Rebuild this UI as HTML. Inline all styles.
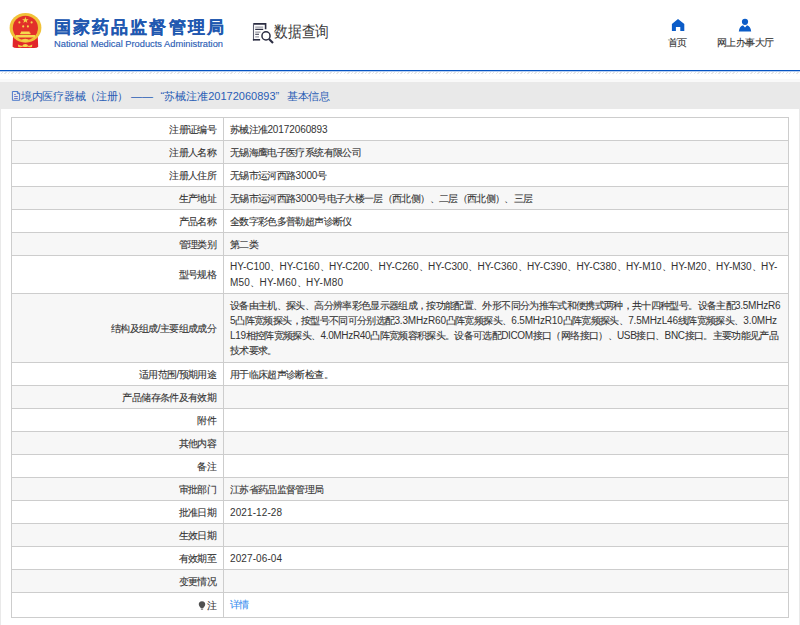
<!DOCTYPE html>
<html><head><meta charset="utf-8">
<style>
*{margin:0;padding:0;box-sizing:border-box}
html,body{width:800px;height:625px;overflow:hidden;background:#fff;font-family:"Liberation Sans",sans-serif;color:#333}
.abs{position:absolute;white-space:nowrap}
#title{left:54px;top:15.5px;font-size:17px;letter-spacing:2.1px;-webkit-text-stroke:0.15px #2158b0;font-weight:bold;color:#2158b0;line-height:24px}
#eng{left:54px;top:39px;font-size:9.3px;color:#2d60b5;-webkit-text-stroke:0.15px #2d60b5;line-height:11px}
#sq{left:274px;top:20.8px;font-size:16px;color:#3a3a3a;line-height:22px;transform:scaleX(0.86);transform-origin:0 0}
.nav{font-size:10px;letter-spacing:-0.6px;color:#333;-webkit-text-stroke:0.1px #333;line-height:12px}
#line{left:0;top:70px;width:800px;height:2px;background:linear-gradient(#0654c2 0 1px,#b9cff0 1px 2px)}
#hatch{left:0;top:72px;width:800px;height:2px;background:repeating-linear-gradient(135deg,#fff 0,#fff 1.5px,#e6e6e6 1.5px,#e6e6e6 2.5px)}
#gray{left:0;top:82px;width:800px;height:543px;background:#e9e9e9}
.pt{top:89px;font-size:11px;color:#2a5db5;line-height:14px}
#panel{left:1px;top:109px;width:798px;height:516px;background:#fff}
table{position:absolute;left:11px;top:117px;width:778px;border-collapse:collapse;table-layout:fixed;font-size:10px;letter-spacing:-0.65px;color:#333}
i{font-style:normal;font-size:10px;letter-spacing:-0.1px;-webkit-text-stroke-width:0}
span[style*="--ls"] i{letter-spacing:var(--ls)}
td{-webkit-text-stroke-width:0.1px;border:1px solid #cdcdcd;padding:0 7px 0 6px;vertical-align:middle;line-height:15px;white-space:nowrap}
td.l{text-align:right;width:212px;color:#333;position:relative}
tr:nth-child(even) td{background:#f7f7f7}
a{color:#3a90f0;text-decoration:none;position:relative;top:-1px}
</style></head><body>
<svg class="abs" style="left:0;top:0" width="50" height="56" viewBox="0 0 50 56">
  <path d="M13 37 L12.6 46.8 Q14 48.3 17.5 48.1 L33.5 48.1 Q37 48.3 38.2 46.8 L37.8 37 Z" fill="#e1262a"/>
  <ellipse cx="25.5" cy="27.8" rx="15.9" ry="14.9" fill="#f1c238"/>
  <ellipse cx="25.4" cy="27.9" rx="12.6" ry="12.1" fill="#e2302a"/>
  <polygon points="25.4,16.8 26.2,19.2 28.7,19.2 26.7,20.7 27.4,23.1 25.4,21.6 23.4,23.1 24.1,20.7 22.1,19.2 24.6,19.2" fill="#f5d54a"/>
  <circle cx="19.4" cy="22.4" r="1.05" fill="#f5d54a"/><circle cx="31.6" cy="22.4" r="1.05" fill="#f5d54a"/>
  <circle cx="23.2" cy="26.4" r="1.05" fill="#f5d54a"/><circle cx="27.9" cy="26.4" r="1.05" fill="#f5d54a"/>
  <path d="M21 31.4 H29.6 V32.7 H21 Z M20.2 32.7 H30.5 V34.3 H20.2 Z M15.9 35 H35 V37.4 H15.9 Z" fill="#f6d84e"/>
  
  <ellipse cx="25.2" cy="40.3" rx="3.2" ry="1.5" fill="#f3cf48"/>
  <path d="M17.9 44.6 Q21 46.2 23 45.4 L27.8 45.4 Q30 46.2 32.3 44.6 L32 47 Q29 47.4 27.5 46.6 L23.2 46.6 Q21 47.4 18.3 47 Z" fill="#f3cf48"/>
  <ellipse cx="25.3" cy="45.6" rx="2.6" ry="1.5" fill="#f6d84e"/>
</svg>
<div class="abs" id="title">国家药品监督管理局</div>
<div class="abs" id="eng">National Medical Products Administration</div>
<svg class="abs" style="left:248px;top:18px" width="30" height="28" viewBox="0 0 30 28">
  <path d="M5.5 5.9 H17.6 V11.3" fill="none" stroke="#2b2d42" stroke-width="1.6"/>
  <path d="M5.5 5.2 V22.5" fill="none" stroke="#5a5c6e" stroke-width="1.1"/>
  <path d="M4.9 21.8 H12.1" fill="none" stroke="#2b2d42" stroke-width="1.6"/>
  <path d="M7.2 9.2h8M7.2 14.1h5.3M7.2 18.8h3.8" stroke="#9a9ba6" stroke-width="1.2"/>
  <path d="M7.2 11.4h8M7.2 16.3h3.8" stroke="#2b2d42" stroke-width="1.1"/>
  <circle cx="18" cy="17.9" r="4.05" fill="none" stroke="#2b2d42" stroke-width="1.5"/>
  <path d="M21 21 L25 25" stroke="#2b2d42" stroke-width="2.1" stroke-linecap="butt"/>
</svg>
<div class="abs" id="sq">数据查询</div>
<svg class="abs" style="left:671px;top:18px" width="14" height="13" viewBox="0 0 14 13">
  <path d="M7 1 L13.3 6 V13 H9.3 V9 H4.9 V13 H0.9 V6 Z" fill="#0b5cc8"/>
</svg>
<div class="abs nav" style="left:668px;top:37px">首页</div>
<svg class="abs" style="left:738px;top:18px" width="14" height="14" viewBox="0 0 14 14">
  <circle cx="7" cy="3.8" r="3.1" fill="#0b5cc8"/>
  <path d="M0.8 13.5 Q1.5 8 5 7.2 L7 9.4 L9 7.2 Q12.5 8 13.2 13.5 Z" fill="#0b5cc8"/>
</svg>
<div class="abs nav" style="left:717px;top:37px">网上办事大厅</div>
<div class="abs" id="line"></div>
<div class="abs" id="hatch"></div>
<div class="abs" style="left:0;top:79px;width:800px;height:3px;background:#f9f9f9"></div>
<div class="abs" id="gray"></div>
<svg class="abs" style="left:11px;top:90px" width="11" height="12" viewBox="0 0 11 12">
  <path d="M1.4 1.5 H6.8 L8.6 3.3 V10.3 H1.4 Z" fill="none" stroke="#4574c9" stroke-width="0.95"/>
  <path d="M6.4 1.6 V3.6 H8.6" fill="none" stroke="#3c6dc6" stroke-width="0.9"/>
  <path d="M3.2 4.5h1.6M3.2 6.5h3.6M3.2 8.5h3.6" stroke="#5a6cc8" stroke-width="0.9"/>
</svg>
<div class="abs pt" style="left:21px;letter-spacing:-0.3px">境内医疗器械（注册）</div>
<div class="abs pt" style="left:131px;letter-spacing:0.1px">——</div>
<div class="abs pt" style="left:160.6px">“苏械注准20172060893”</div>
<div class="abs pt" style="left:286.7px;letter-spacing:-0.1px">基本信息</div>
<div class="abs" id="panel"></div>
<table>
<tr style="height:23px"><td class="l">注册证编号</td><td>苏械注准<i>20172060893</i></td></tr>
<tr style="height:23px"><td class="l">注册人名称</td><td>无锡海鹰电子医疗系统有限公司</td></tr>
<tr style="height:23px"><td class="l">注册人住所</td><td>无锡市运河西路<i>3000</i>号</td></tr>
<tr style="height:23px"><td class="l">生产地址</td><td>无锡市运河西路<i>3000</i>号电子大楼一层（西北侧）、二层（西北侧）、三层</td></tr>
<tr style="height:23px"><td class="l">产品名称</td><td>全数字彩色多普勒超声诊断仪</td></tr>
<tr style="height:23px"><td class="l">管理类别</td><td>第二类</td></tr>
<tr style="height:38px"><td class="l">型号规格</td><td style="line-height:16px"><span style="--ls:-0.013px"><i>HY-C100</i>、<i>HY-C160</i>、<i>HY-C200</i>、<i>HY-C260</i>、<i>HY-C300</i>、<i>HY-C360</i>、<i>HY-C390</i>、<i>HY-C380</i>、<i>HY-M10</i>、<i>HY-M20</i>、<i>HY-M30</i>、<i>HY-</i></span><br><span style="--ls:0.240px"><i>M50</i>、<i>HY-M60</i>、<i>HY-M80</i></span></td></tr>
<tr style="height:69px"><td class="l">结构及组成/主要组成成分</td><td><span style="--ls:-0.240px">设备由主机、探头、高分辨率彩色显示器组成，按功能配置、外形不同分为推车式和便携式两种，共十四种型号。设备主配<i>3.5MHzR6</i></span><br><span style="--ls:-0.153px"><i>5</i>凸阵宽频探头，按型号不同可分别选配<i>3.3MHzR60</i>凸阵宽频探头、<i>6.5MHzR10</i>凸阵宽频探头、<i>7.5MHzL46</i>线阵宽频探头、<i>3.0MHz</i></span><br><span style="--ls:-0.340px"><i>L19</i>相控阵宽频探头、<i>4.0MHzR40</i>凸阵宽频容积探头。设备可选配<i>DICOM</i>接口（网络接口）、<i>USB</i>接口、<i>BNC</i>接口。主要功能见产品</span><br>技术要求。</td></tr>
<tr style="height:23px"><td class="l">适用范围/预期用途</td><td>用于临床超声诊断检查。</td></tr>
<tr style="height:23px"><td class="l">产品储存条件及有效期</td><td></td></tr>
<tr style="height:23px"><td class="l">附件</td><td></td></tr>
<tr style="height:23px"><td class="l">其他内容</td><td></td></tr>
<tr style="height:23px"><td class="l">备注</td><td></td></tr>
<tr style="height:23px"><td class="l">审批部门</td><td>江苏省药品监督管理局</td></tr>
<tr style="height:23px"><td class="l">批准日期</td><td><i style="letter-spacing:0.1px">2021-12-28</i></td></tr>
<tr style="height:23px"><td class="l">生效日期</td><td></td></tr>
<tr style="height:23px"><td class="l">有效期至</td><td><i style="letter-spacing:0.1px">2027-06-04</i></td></tr>
<tr style="height:23px"><td class="l">变更情况</td><td></td></tr>
<tr style="height:25px"><td class="l"><svg style="position:absolute;left:186px;top:8px" width="8" height="9" viewBox="0 0 8 9"><path d="M4 0.3 C6.2 0.3 7.4 1.9 7.2 3.7 C7 5.2 5.6 6 5.1 7.3 H2.9 C2.4 6 1 5.2 0.8 3.7 C0.6 1.9 1.8 0.3 4 0.3 Z" fill="#505050"/><rect x="2.9" y="7.6" width="2.2" height="1.2" fill="#808080"/></svg>注</td><td><a>详情</a></td></tr>
</table>
</body></html>
